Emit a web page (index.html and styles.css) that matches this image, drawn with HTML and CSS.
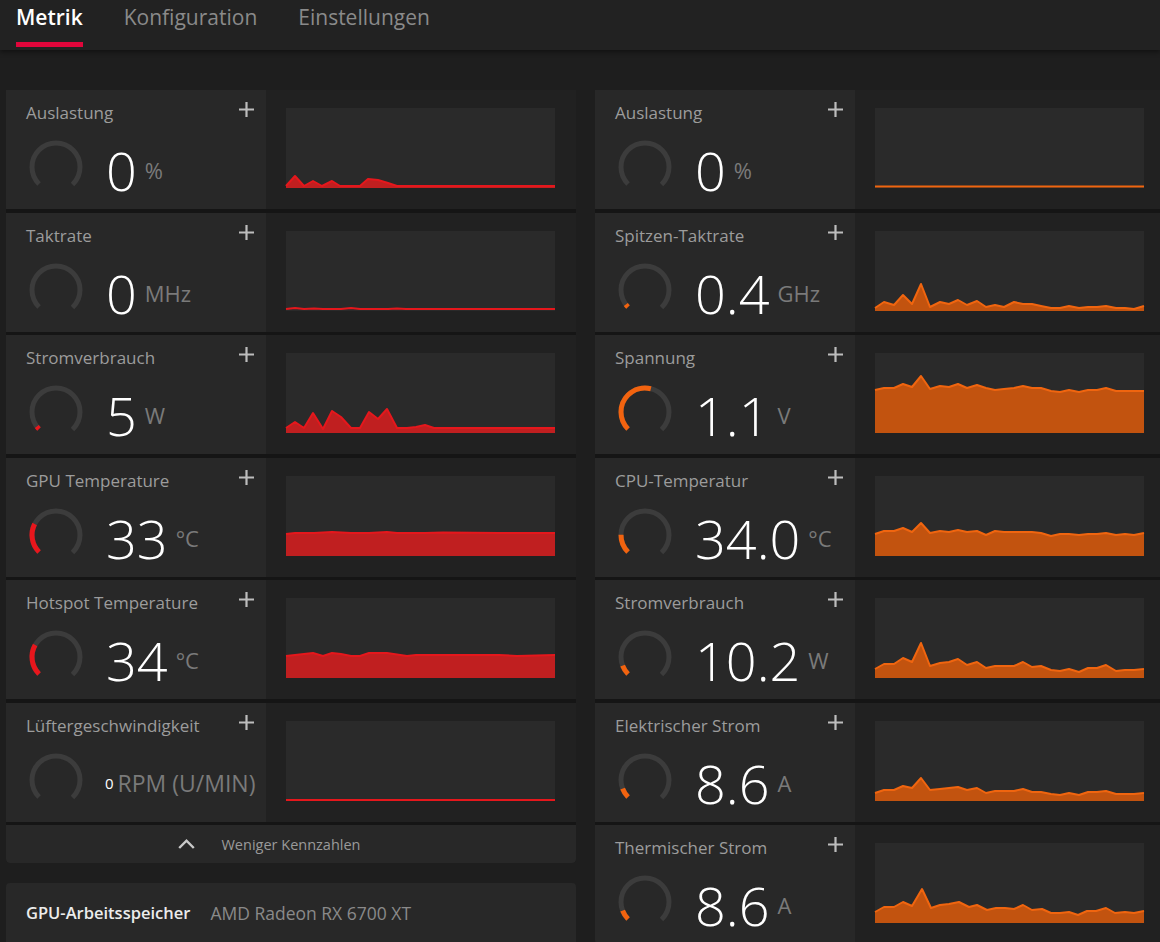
FILE: index.html
```html
<!DOCTYPE html>
<html lang="de">
<head>
<meta charset="utf-8">
<title>Metrik</title>
<link rel="stylesheet" href="styles.css">
</head>
<body>
<header class="tabs">
  <div class="tab active">Metrik</div>
  <div class="tab">Konfiguration</div>
  <div class="tab">Einstellungen</div>
</header>

<main class="main">
  <section class="col">
    <div class="list">
      <div class="metric">
        <div class="info">
          <div class="head"><span class="label">Auslastung</span><svg class="plus" viewBox="0 0 15 15" width="15" height="15"><path d="M7.5 0V15M0 7.5H15"/></svg></div>
          <div class="reading">
            <svg class="gauge" viewBox="0 0 56 56" width="56" height="56"><circle class="track" cx="28" cy="28" r="24" transform="rotate(135 28 28)"/></svg>
            <div class="val"><span class="num">0</span><span class="unit">%</span></div>
          </div>
        </div>
        <div class="graph"><svg class="spark red" viewBox="0 0 269 80" width="269" height="80"><polygon class="area" points="0,80 0,78 9,68 18,78 27,73 36,78 46,73 54,78 74,78 82,71 92,72 102,75 111,78 269,78 269,80"/><polyline class="line" points="0,78 9,68 18,78 27,73 36,78 46,73 54,78 74,78 82,71 92,72 102,75 111,78 269,78"/></svg></div>
      </div>

      <div class="metric">
        <div class="info">
          <div class="head"><span class="label">Taktrate</span><svg class="plus" viewBox="0 0 15 15" width="15" height="15"><path d="M7.5 0V15M0 7.5H15"/></svg></div>
          <div class="reading">
            <svg class="gauge" viewBox="0 0 56 56" width="56" height="56"><circle class="track" cx="28" cy="28" r="24" transform="rotate(135 28 28)"/></svg>
            <div class="val"><span class="num">0</span><span class="unit">MHz</span></div>
          </div>
        </div>
        <div class="graph"><svg class="spark red" viewBox="0 0 269 80" width="269" height="80"><polyline class="line" points="0,78 9,77 18,78 28,77.5 37,78 55,78 65,77 74,78 102,78 111,77.5 120,78 269,78"/></svg></div>
      </div>

      <div class="metric">
        <div class="info">
          <div class="head"><span class="label">Stromverbrauch</span><svg class="plus" viewBox="0 0 15 15" width="15" height="15"><path d="M7.5 0V15M0 7.5H15"/></svg></div>
          <div class="reading">
            <svg class="gauge" viewBox="0 0 56 56" width="56" height="56"><circle class="track" cx="28" cy="28" r="24" transform="rotate(135 28 28)"/><circle class="fill red" cx="28" cy="28" r="24" stroke-dasharray="3.5 200" transform="rotate(135 28 28)"/></svg>
            <div class="val"><span class="num">5</span><span class="unit">W</span></div>
          </div>
        </div>
        <div class="graph"><svg class="spark red" viewBox="0 0 269 80" width="269" height="80"><polygon class="area" points="0,80 0,75 9,69 18,75 27,60 37,76 46,58 55,64 65,75 74,75 83,59 92,66 101,56 111,75 121,75 130,74 139,72 148,75 269,75 269,80"/><polyline class="line" points="0,75 9,69 18,75 27,60 37,76 46,58 55,64 65,75 74,75 83,59 92,66 101,56 111,75 121,75 130,74 139,72 148,75 269,75"/></svg></div>
      </div>

      <div class="metric">
        <div class="info">
          <div class="head"><span class="label">GPU Temperature</span><svg class="plus" viewBox="0 0 15 15" width="15" height="15"><path d="M7.5 0V15M0 7.5H15"/></svg></div>
          <div class="reading">
            <svg class="gauge" viewBox="0 0 56 56" width="56" height="56"><circle class="track" cx="28" cy="28" r="24" transform="rotate(135 28 28)"/><circle class="fill red" cx="28" cy="28" r="24" stroke-dasharray="30 200" transform="rotate(135 28 28)"/></svg>
            <div class="val"><span class="num">33</span><span class="unit">°C</span></div>
          </div>
        </div>
        <div class="graph"><svg class="spark red" viewBox="0 0 269 80" width="269" height="80"><polygon class="area" points="0,80 0,58 9,57 28,57 46,56 65,57 83,57 101,56 111,57 139,57 157,56.5 213,57 241,57 269,57 269,80"/><polyline class="line" points="0,58 9,57 28,57 46,56 65,57 83,57 101,56 111,57 139,57 157,56.5 213,57 241,57 269,57"/></svg></div>
      </div>

      <div class="metric">
        <div class="info">
          <div class="head"><span class="label">Hotspot Temperature</span><svg class="plus" viewBox="0 0 15 15" width="15" height="15"><path d="M7.5 0V15M0 7.5H15"/></svg></div>
          <div class="reading">
            <svg class="gauge" viewBox="0 0 56 56" width="56" height="56"><circle class="track" cx="28" cy="28" r="24" transform="rotate(135 28 28)"/><circle class="fill red" cx="28" cy="28" r="24" stroke-dasharray="31 200" transform="rotate(135 28 28)"/></svg>
            <div class="val"><span class="num">34</span><span class="unit">°C</span></div>
          </div>
        </div>
        <div class="graph"><svg class="spark red" viewBox="0 0 269 80" width="269" height="80"><polygon class="area" points="0,80 0,58 9,57 27,55 37,58 46,55 55,56 65,58 74,58 83,55 101,55 121,58 130,57 157,57 176,57 194,57 213,57 231,58 269,57 269,80"/><polyline class="line" points="0,58 9,57 27,55 37,58 46,55 55,56 65,58 74,58 83,55 101,55 121,58 130,57 157,57 176,57 194,57 213,57 231,58 269,57"/></svg></div>
      </div>

      <div class="metric">
        <div class="info">
          <div class="head"><span class="label">Lüftergeschwindigkeit</span><svg class="plus" viewBox="0 0 15 15" width="15" height="15"><path d="M7.5 0V15M0 7.5H15"/></svg></div>
          <div class="reading">
            <svg class="gauge" viewBox="0 0 56 56" width="56" height="56"><circle class="track" cx="28" cy="28" r="24" transform="rotate(135 28 28)"/></svg>
            <div class="val small"><span class="num">0</span><span class="unit">RPM (U/MIN)</span></div>
          </div>
        </div>
        <div class="graph"><svg class="spark red" viewBox="0 0 269 80" width="269" height="80"><polyline class="line" points="0,79 269,79"/></svg></div>
      </div>

      <div class="less">
        <span class="less-icon"><svg viewBox="0 0 17 10" width="17" height="10"><polyline points="1.2,9 8.5,1.7 15.8,9"/></svg></span>
        <span class="less-text">Weniger Kennzahlen</span>
        <span></span>
      </div>
    </div>

    <div class="mem">
      <span class="mem-title">GPU-Arbeitsspeicher</span>
      <span class="mem-name">AMD Radeon RX 6700 XT</span>
    </div>
  </section>

  <section class="col">
    <div class="list">
      <div class="metric">
        <div class="info">
          <div class="head"><span class="label">Auslastung</span><svg class="plus" viewBox="0 0 15 15" width="15" height="15"><path d="M7.5 0V15M0 7.5H15"/></svg></div>
          <div class="reading">
            <svg class="gauge" viewBox="0 0 56 56" width="56" height="56"><circle class="track" cx="28" cy="28" r="24" transform="rotate(135 28 28)"/></svg>
            <div class="val"><span class="num">0</span><span class="unit">%</span></div>
          </div>
        </div>
        <div class="graph"><svg class="spark orange" viewBox="0 0 269 80" width="269" height="80"><polyline class="line" points="0,78.5 269,78.5"/></svg></div>
      </div>

      <div class="metric">
        <div class="info">
          <div class="head"><span class="label">Spitzen-Taktrate</span><svg class="plus" viewBox="0 0 15 15" width="15" height="15"><path d="M7.5 0V15M0 7.5H15"/></svg></div>
          <div class="reading">
            <svg class="gauge" viewBox="0 0 56 56" width="56" height="56"><circle class="track" cx="28" cy="28" r="24" transform="rotate(135 28 28)"/><circle class="fill orange" cx="28" cy="28" r="24" stroke-dasharray="3.5 200" transform="rotate(135 28 28)"/></svg>
            <div class="val"><span class="num">0.4</span><span class="unit">GHz</span></div>
          </div>
        </div>
        <div class="graph"><svg class="spark orange" viewBox="0 0 269 80" width="269" height="80"><polygon class="area" points="0,80 0,77 9,71 19,74 28,64 37,73 46,53 55,76 65,71 74,73 83,69 92,74 102,70 111,76 120,74 129,76 139,71 148,73 157,73 166,75 176,77 185,77 194,75 204,77 213,76 222,76 231,75 241,77 250,77 259,78 269,75 269,80"/><polyline class="line" points="0,77 9,71 19,74 28,64 37,73 46,53 55,76 65,71 74,73 83,69 92,74 102,70 111,76 120,74 129,76 139,71 148,73 157,73 166,75 176,77 185,77 194,75 204,77 213,76 222,76 231,75 241,77 250,77 259,78 269,75"/></svg></div>
      </div>

      <div class="metric">
        <div class="info">
          <div class="head"><span class="label">Spannung</span><svg class="plus" viewBox="0 0 15 15" width="15" height="15"><path d="M7.5 0V15M0 7.5H15"/></svg></div>
          <div class="reading">
            <svg class="gauge" viewBox="0 0 56 56" width="56" height="56"><circle class="track" cx="28" cy="28" r="24" transform="rotate(135 28 28)"/><circle class="fill orange" cx="28" cy="28" r="24" stroke-dasharray="62 200" transform="rotate(135 28 28)"/></svg>
            <div class="val"><span class="num">1.1</span><span class="unit">V</span></div>
          </div>
        </div>
        <div class="graph"><svg class="spark orange" viewBox="0 0 269 80" width="269" height="80"><polygon class="area" points="0,80 0,37 9,35 19,35 28,31 37,34 46,23 55,36 65,33 74,34 83,31 92,35 102,32 111,35 120,37 129,36 139,35 148,33 157,35 166,35 176,38 185,39 194,37 204,39 213,37 222,37 231,35 241,38 250,38 259,38 269,38 269,80"/><polyline class="line" points="0,37 9,35 19,35 28,31 37,34 46,23 55,36 65,33 74,34 83,31 92,35 102,32 111,35 120,37 129,36 139,35 148,33 157,35 166,35 176,38 185,39 194,37 204,39 213,37 222,37 231,35 241,38 250,38 259,38 269,38"/></svg></div>
      </div>

      <div class="metric">
        <div class="info">
          <div class="head"><span class="label">CPU-Temperatur</span><svg class="plus" viewBox="0 0 15 15" width="15" height="15"><path d="M7.5 0V15M0 7.5H15"/></svg></div>
          <div class="reading">
            <svg class="gauge" viewBox="0 0 56 56" width="56" height="56"><circle class="track" cx="28" cy="28" r="24" transform="rotate(135 28 28)"/><circle class="fill orange" cx="28" cy="28" r="24" stroke-dasharray="19 200" transform="rotate(135 28 28)"/></svg>
            <div class="val"><span class="num">34.0</span><span class="unit">°C</span></div>
          </div>
        </div>
        <div class="graph"><svg class="spark orange" viewBox="0 0 269 80" width="269" height="80"><polygon class="area" points="0,80 0,58 9,55 19,55 28,52 37,56 46,47 55,57 65,55 74,56 83,54 92,56 102,55 111,59 120,55 129,56 139,56 148,56 157,56 166,57 176,60 185,58 194,58 204,59 213,58 222,58 231,57 241,59 250,58 259,59 269,57 269,80"/><polyline class="line" points="0,58 9,55 19,55 28,52 37,56 46,47 55,57 65,55 74,56 83,54 92,56 102,55 111,59 120,55 129,56 139,56 148,56 157,56 166,57 176,60 185,58 194,58 204,59 213,58 222,58 231,57 241,59 250,58 259,59 269,57"/></svg></div>
      </div>

      <div class="metric">
        <div class="info">
          <div class="head"><span class="label">Stromverbrauch</span><svg class="plus" viewBox="0 0 15 15" width="15" height="15"><path d="M7.5 0V15M0 7.5H15"/></svg></div>
          <div class="reading">
            <svg class="gauge" viewBox="0 0 56 56" width="56" height="56"><circle class="track" cx="28" cy="28" r="24" transform="rotate(135 28 28)"/><circle class="fill orange" cx="28" cy="28" r="24" stroke-dasharray="10 200" transform="rotate(135 28 28)"/></svg>
            <div class="val"><span class="num">10.2</span><span class="unit">W</span></div>
          </div>
        </div>
        <div class="graph"><svg class="spark orange" viewBox="0 0 269 80" width="269" height="80"><polygon class="area" points="0,80 0,71 9,66 19,66 28,60 37,64 46,45 55,68 65,65 74,64 83,61 92,67 102,64 111,70 120,68 129,68 139,68 148,64 157,69 166,68 176,72 185,73 194,71 204,74 213,70 222,70 231,67 241,73 250,72 259,72 269,71 269,80"/><polyline class="line" points="0,71 9,66 19,66 28,60 37,64 46,45 55,68 65,65 74,64 83,61 92,67 102,64 111,70 120,68 129,68 139,68 148,64 157,69 166,68 176,72 185,73 194,71 204,74 213,70 222,70 231,67 241,73 250,72 259,72 269,71"/></svg></div>
      </div>

      <div class="metric">
        <div class="info">
          <div class="head"><span class="label">Elektrischer Strom</span><svg class="plus" viewBox="0 0 15 15" width="15" height="15"><path d="M7.5 0V15M0 7.5H15"/></svg></div>
          <div class="reading">
            <svg class="gauge" viewBox="0 0 56 56" width="56" height="56"><circle class="track" cx="28" cy="28" r="24" transform="rotate(135 28 28)"/><circle class="fill orange" cx="28" cy="28" r="24" stroke-dasharray="10 200" transform="rotate(135 28 28)"/></svg>
            <div class="val"><span class="num">8.6</span><span class="unit">A</span></div>
          </div>
        </div>
        <div class="graph"><svg class="spark orange" viewBox="0 0 269 80" width="269" height="80"><polygon class="area" points="0,80 0,72 9,69 19,69 28,65 37,67 46,57 55,69 65,68 74,67 83,66 92,69 102,67 111,72 120,70 129,70 139,70 148,68 157,71 166,71 176,73 185,74 194,72 204,74 213,71 222,71 231,70 241,73 250,73 259,73 269,72 269,80"/><polyline class="line" points="0,72 9,69 19,69 28,65 37,67 46,57 55,69 65,68 74,67 83,66 92,69 102,67 111,72 120,70 129,70 139,70 148,68 157,71 166,71 176,73 185,74 194,72 204,74 213,71 222,71 231,70 241,73 250,73 259,73 269,72"/></svg></div>
      </div>

      <div class="metric">
        <div class="info">
          <div class="head"><span class="label">Thermischer Strom</span><svg class="plus" viewBox="0 0 15 15" width="15" height="15"><path d="M7.5 0V15M0 7.5H15"/></svg></div>
          <div class="reading">
            <svg class="gauge" viewBox="0 0 56 56" width="56" height="56"><circle class="track" cx="28" cy="28" r="24" transform="rotate(135 28 28)"/><circle class="fill orange" cx="28" cy="28" r="24" stroke-dasharray="10 200" transform="rotate(135 28 28)"/></svg>
            <div class="val"><span class="num">8.6</span><span class="unit">A</span></div>
          </div>
        </div>
        <div class="graph"><svg class="spark orange" viewBox="0 0 269 80" width="269" height="80"><polygon class="area" points="0,80 0,69 9,64 19,64 28,59 37,63 47,46 56,65 65,62 74,61 84,59 94,64 102,62 112,67 121,65 130,65 139,66 148,62 157,67 167,66 176,70 185,70 194,69 203,72 212,68 221,68 231,65 240,70 250,69 259,70 269,68 269,80"/><polyline class="line" points="0,69 9,64 19,64 28,59 37,63 47,46 56,65 65,62 74,61 84,59 94,64 102,62 112,67 121,65 130,65 139,66 148,62 157,67 167,66 176,70 185,70 194,69 203,72 212,68 221,68 231,65 240,70 250,69 259,70 269,68"/></svg></div>
      </div>
    </div>
  </section>
</main>
</body>
</html>
```

FILE: styles.css
```css
* { box-sizing: border-box; }

html, body {
  margin: 0;
  padding: 0;
}

body {
  width: 1160px;
  height: 942px;
  overflow: hidden;
  background: #1e1e1e;
  font-family: "Open Sans", "Noto Sans", sans-serif;
  color: #e6e6e6;
}

/* Tabs */
.tabs {
  position: relative;
  z-index: 2;
  height: 50px;
  display: flex;
  gap: 41px;
  padding-left: 16px;
  background: #222222;
  box-shadow: 0 2px 5px rgba(0, 0, 0, 0.45);
}

.tab {
  display: flex;
  flex-direction: column;
  padding-top: 3px;
  font-size: 21px;
  line-height: 28px;
  color: #8a8a8a;
}

.tab::after {
  content: "";
  display: block;
  height: 5px;
  margin-top: 11px;
}

.tab.active {
  color: #ffffff;
  font-weight: 600;
}

.tab.active::after {
  background: #e1063b;
}

/* Main grid */
.main {
  display: grid;
  grid-template-columns: 570px 570px;
  column-gap: 19px;
  padding: 40px 0 0 6px;
}

.col {
  display: flex;
  flex-direction: column;
}

.list {
  display: flex;
  flex-direction: column;
  gap: 3.5px;
  background: #151515;
  border-radius: 0 0 4px 4px;
  overflow: hidden;
}

.metric {
  display: flex;
  height: 119px;
  flex-shrink: 0;
}

.info {
  width: 260px;
  flex-shrink: 0;
  background: #282828;
  padding: 12px 11px 0 20px;
}

.head {
  display: flex;
  justify-content: space-between;
  align-items: flex-start;
}

.label {
  font-size: 17px;
  line-height: 22px;
  color: #9c9c9c;
  white-space: nowrap;
}

.plus {
  margin-top: 0;
  margin-right: 1px;
  flex-shrink: 0;
}

.plus path {
  stroke: #bdbdbd;
  stroke-width: 2.2;
  fill: none;
}

.reading {
  display: flex;
  align-items: center;
  height: 56px;
  margin-top: 15px;
}

.gauge {
  margin-left: 2px;
  flex-shrink: 0;
}

.gauge circle {
  fill: none;
  stroke-width: 5;
}

.gauge .track {
  stroke: #3c3c3c;
  stroke-dasharray: 113.1 200;
}

.gauge .fill.red { stroke: #e8161c; }
.gauge .fill.orange { stroke: #f2630f; }

.val {
  display: flex;
  align-items: center;
  margin-left: 22px;
  padding-top: 6px;
  white-space: nowrap;
}

.num {
  font-size: 54px;
  line-height: 54px;
  font-weight: 300;
  color: #ffffff;
}

.unit {
  margin-left: 8px;
  font-size: 22px;
  line-height: 22px;
  color: #7a7a7a;
}

.val.small {
  margin-left: 21px;
}

.val.small .num {
  font-size: 15px;
  line-height: 20px;
  font-weight: 400;
}

.val.small .unit {
  margin-left: 4px;
  font-size: 23px;
  line-height: 28px;
}

.graph {
  flex: 1;
  background: #212121;
  padding: 18px 21px 0 20px;
}

.spark {
  display: block;
  background: #2a2a2a;
  overflow: visible;
}

.spark .line {
  fill: none;
  stroke-width: 2;
  stroke-linejoin: round;
}

.spark.red .area { fill: #c01f20; }
.spark.red .line { stroke: #e5171c; }
.spark.orange .area { fill: #c2530f; }
.spark.orange .line { stroke: #f0650f; }

/* Weniger Kennzahlen */
.less {
  height: 38px;
  flex-shrink: 0;
  background: #282828;
  display: grid;
  grid-template-columns: 1fr auto 1fr;
  align-items: center;
}

.less-icon {
  justify-self: end;
  margin-right: 26px;
  display: flex;
}

.less-icon polyline {
  fill: none;
  stroke: #c8c8c8;
  stroke-width: 2.4;
}

.less-text {
  font-size: 14.5px;
  color: #9a9a9a;
}

/* Memory card */
.mem {
  margin-top: 20px;
  height: 80px;
  background: #282828;
  border-radius: 4px 4px 0 0;
  padding: 19px 20px 0 20px;
  display: flex;
  gap: 20px;
  align-items: flex-start;
}

.mem-title {
  font-size: 16.5px;
  line-height: 22px;
  font-weight: 600;
  color: #ececec;
}

.mem-name {
  font-size: 17.5px;
  line-height: 22px;
  color: #8a8a8a;
}
```
